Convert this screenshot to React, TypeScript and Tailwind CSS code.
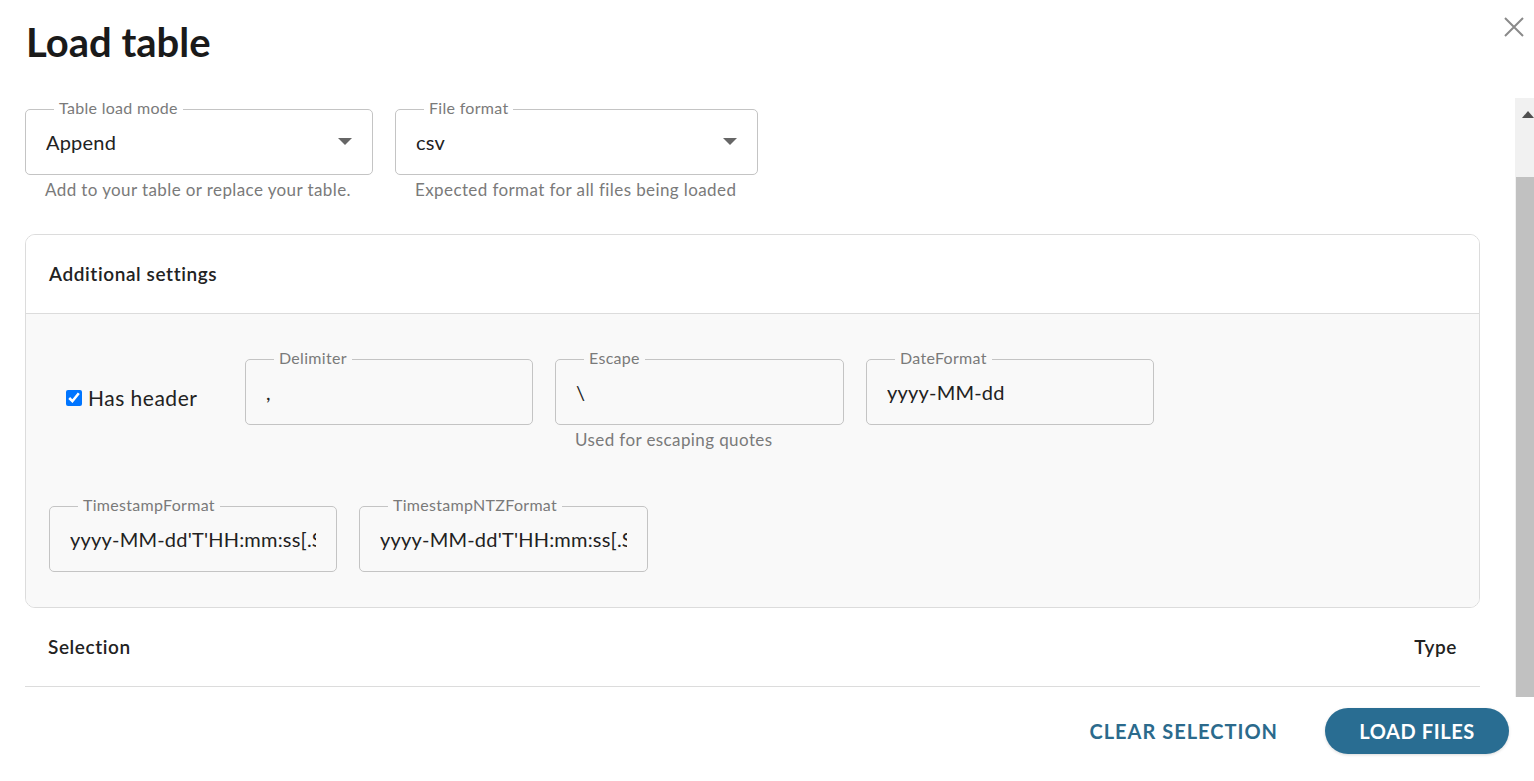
import React from "react";

function Field({
  label,
  value,
  bg,
  select,
  width,
  helper,
}: {
  label: string;
  value: string;
  bg: string;
  select?: boolean;
  width: string;
  helper?: string;
}) {
  return (
    <div className={`flex flex-col ${width}`}>
      <div className="relative h-[66px] rounded-[5px] border border-[#c4c4c4] flex items-center pl-5 pr-5">
        <span
          className={`absolute left-[28px] top-[-12px] px-[5px] text-[16px] tracking-[0.3px] leading-[20px] text-[#7a7a7a] ${bg}`}
        >
          {label}
        </span>
        <input
          readOnly
          value={value}
          className="w-full min-w-0 bg-transparent outline-none text-[20px] tracking-[0.2px] text-[#222] leading-[28px]"
        />
        {select && (
          <svg width="14" height="8" viewBox="0 0 14 8" className="shrink-0 ml-2">
            <path d="M0 0 L14 0 L7 7 Z" fill="#666" />
          </svg>
        )}
      </div>
      {helper && (
        <div className="pl-5 mt-[5px] text-[17px] tracking-[0.4px] leading-[20px] text-[#7a7a7a]">
          {helper}
        </div>
      )}
    </div>
  );
}

export default function App() {
  return (
    <div className="w-[1534px] h-[781px] bg-white flex flex-col overflow-hidden font-['Lato',sans-serif]">
      <header className="h-[98px] flex justify-between items-start shrink-0">
        <h1 className="pl-[26px] pt-[16px] text-[40px] leading-[52px] font-bold text-[#1a1a1a]">
          Load table
        </h1>
        <svg width="20" height="20" viewBox="0 0 20 20" className="mt-[17px] mr-[10px]">
          <path d="M1 1 L19 19 M19 1 L1 19" stroke="#8a8a8a" strokeWidth="2" />
        </svg>
      </header>

      <div className="flex h-[599px] shrink-0">
        <div className="flex-1 pl-[25px] pr-[35px] pt-[11px] flex flex-col">
          <div className="flex gap-[22px]">
            <Field
              label="Table load mode"
              value="Append"
              bg="bg-white"
              select
              width="w-[348px]"
              helper="Add to your table or replace your table."
            />
            <Field
              label="File format"
              value="csv"
              bg="bg-white"
              select
              width="w-[363px]"
              helper="Expected format for all files being loaded"
            />
          </div>

          <div className="mt-[34px] rounded-[10px] border border-[#dcdcdc] overflow-hidden">
            <div className="h-[79px] bg-white flex items-center pl-[23px] border-b border-[#dcdcdc]">
              <span className="text-[19px] font-semibold text-[#222] tracking-[0.6px]">
                Additional settings
              </span>
            </div>
            <div className="bg-[#f9f9f9] pl-[23px] pt-[45px] pb-[35px] flex flex-col">
              <div className="flex gap-[22px] items-start">
                <div className="w-[174px] h-[66px] pl-[17px] pt-[12px] flex items-center">
                  <label className="flex items-center gap-[6px] text-[21px] tracking-[0.5px] text-[#222]">
                    <input
                      type="checkbox"
                      checked
                      readOnly
                      className="w-4 h-4 accent-[#0075ff]"
                    />
                    Has header
                  </label>
                </div>
                <Field label="Delimiter" value="," bg="bg-[#f9f9f9]" width="w-[288px]" />
                <Field
                  label="Escape"
                  value="\"
                  bg="bg-[#f9f9f9]"
                  width="w-[289px]"
                  helper="Used for escaping quotes"
                />
                <Field label="DateFormat" value="yyyy-MM-dd" bg="bg-[#f9f9f9]" width="w-[288px]" />
              </div>
              <div className="flex gap-[22px] mt-[56px]">
                <Field
                  label="TimestampFormat"
                  value="yyyy-MM-dd'T'HH:mm:ss[.SSS][XXX]"
                  bg="bg-[#f9f9f9]"
                  width="w-[288px]"
                />
                <Field
                  label="TimestampNTZFormat"
                  value="yyyy-MM-dd'T'HH:mm:ss[.SSS]"
                  bg="bg-[#f9f9f9]"
                  width="w-[289px]"
                />
              </div>
            </div>
          </div>

          <div className="h-[79px] flex items-center justify-between px-[23px] border-b border-[#dcdcdc]">
            <span className="text-[19px] font-semibold text-[#222] tracking-[0.6px]">Selection</span>
            <span className="text-[19px] font-semibold text-[#222] tracking-[0.6px]">Type</span>
          </div>
        </div>

        <div className="w-[19px] bg-[#f1f1f1] flex flex-col shrink-0">
          <div className="h-[79px] pl-[7px] pt-[13px]">
            <svg width="12" height="7" viewBox="0 0 12 7">
              <path d="M0 7 L6 0 L12 7 Z" fill="#505050" />
            </svg>
          </div>
          <div className="flex-1 ml-[1px] bg-[#c1c1c1]" />
        </div>
      </div>

      <footer className="flex-1 flex justify-end items-start gap-[47px] pt-[11px] pr-[25px]">
        <button className="h-[46px] text-[20px] font-bold tracking-[1px] text-[#2b6a8c]">
          CLEAR SELECTION
        </button>
        <button className="h-[46px] w-[184px] rounded-full bg-[#296d92] text-white text-[20px] font-bold tracking-[0.6px] shadow-[0_1px_3px_rgba(0,0,0,0.15)]">
          LOAD FILES
        </button>
      </footer>
    </div>
  );
}
